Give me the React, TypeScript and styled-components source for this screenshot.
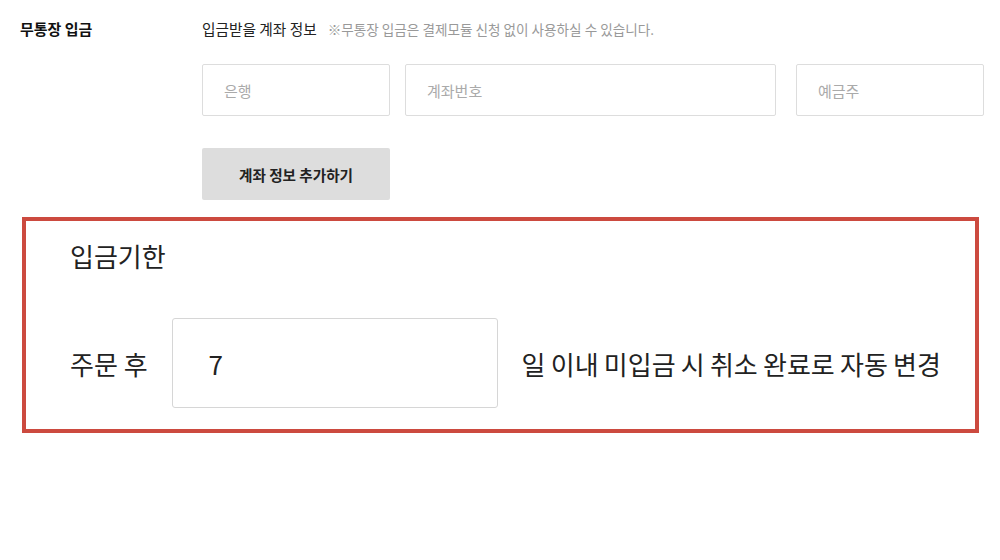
import React from "react";
import styled, { createGlobalStyle } from "styled-components";

const Global = createGlobalStyle`
  html, body { margin: 0; padding: 0; background: #fff; }
  body { font-family: "Noto Sans CJK KR", "Noto Sans", sans-serif; color: #222; }
  * { box-sizing: border-box; }
`;

const Page = styled.div`
  width: 1000px;
  height: 560px;
  padding-top: 14px;
`;

const Section = styled.div`
  display: grid;
  grid-template-columns: 182px 1fr;
  padding-left: 20px;
`;

const Label = styled.div`
  font-size: 15px;
  font-weight: 700;
  line-height: 30px;
  color: #111;
`;

const Body = styled.div`
  display: flex;
  flex-direction: column;
`;

const TitleRow = styled.div`
  display: flex;
  align-items: baseline;
  gap: 11px;
  height: 30px;
  line-height: 30px;
`;

const Title = styled.span`
  font-size: 14.7px;
  color: #222;
`;

const Note = styled.span`
  font-size: 13.6px;
  color: #999;
`;

const Inputs = styled.div`
  display: flex;
  margin-top: 20px;
`;

const Field = styled.div<{ $w: number; $gap: number }>`
  width: ${(p) => p.$w}px;
  margin-left: ${(p) => p.$gap}px;
  height: 52px;
  border: 1px solid #ddd;
  border-radius: 2px;
  padding-left: 21px;
  display: flex;
  align-items: center;
  font-size: 15px;
  color: #aaa;
`;

const AddButton = styled.div`
  width: 188px;
  height: 52px;
  margin-top: 32px;
  background: #dddddd;
  border-radius: 2px;
  display: flex;
  align-items: center;
  justify-content: center;
  font-size: 14.6px;
  font-weight: 700;
  color: #222;
`;

const Highlight = styled.div`
  margin: 17px 0 0 22px;
  width: 957px;
  height: 216px;
  border: 4px solid #cc4a3f;
  padding: 17px 0 0 44px;
`;

const DueTitle = styled.div`
  font-size: 26px;
  line-height: 36px;
  color: #222;
`;

const DueRow = styled.div`
  display: flex;
  align-items: center;
  margin-top: 44px;
  font-size: 26px;
  color: #222;
`;

const DayInput = styled.div`
  width: 326px;
  height: 90px;
  margin: 0 24px 0 24px;
  border: 1.5px solid #d6d6d6;
  border-radius: 3px;
  display: flex;
  align-items: center;
  padding-left: 36px;
  font-size: 26px;
  color: #222;
`;

const Trailing = styled.span`
  word-spacing: -0.6px;
`;

export default function App() {
  return (
    <Page>
      <Global />
      <Section>
        <Label>무통장 입금</Label>
        <Body>
          <TitleRow>
            <Title>입금받을 계좌 정보</Title>
            <Note>※무통장 입금은 결제모듈 신청 없이 사용하실 수 있습니다.</Note>
          </TitleRow>
          <Inputs>
            <Field $w={188} $gap={0}>은행</Field>
            <Field $w={371} $gap={15}>계좌번호</Field>
            <Field $w={188} $gap={20}>예금주</Field>
          </Inputs>
          <AddButton>계좌 정보 추가하기</AddButton>
        </Body>
      </Section>
      <Highlight>
        <DueTitle>입금기한</DueTitle>
        <DueRow>
          <span>주문 후</span>
          <DayInput>7</DayInput>
          <Trailing>일 이내 미입금 시 취소 완료로 자동 변경</Trailing>
        </DueRow>
      </Highlight>
    </Page>
  );
}
